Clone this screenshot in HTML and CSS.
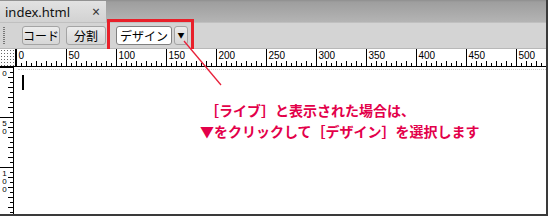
FILE: index.html
```html
<!DOCTYPE html>
<html lang="ja">
<head>
<meta charset="utf-8">
<link rel="stylesheet" href="styles.css">
</head>
<body>
<div class="frame">
  <div class="tabbar">
    <div class="tab"><span class="tab-name">index.html</span><span class="tab-close">×</span></div>
  </div>
  <div class="toolbar">
    <div class="grip"></div>
    <button class="btn b-code">コード</button>
    <button class="btn b-split">分割</button>
    <div class="group">
      <button class="btn active">デザイン</button>
      <button class="btn drop">▼</button>
    </div>
  </div>
  <div class="hruler-row">
    <div class="corner"></div>
    <svg class="hruler" width="531" height="18" id="hr"></svg>
  </div>
  <div class="main">
    <svg class="vruler" width="14" height="147" id="vr"></svg>
    <div class="canvas">
      <div class="dots"></div>
      <div class="caret"></div>
    </div>
  </div>
</div>
<svg class="leader" width="549" height="217"><line x1="184" y1="41" x2="221" y2="85" stroke="#e8203a" stroke-width="1.3"/></svg>
<div class="note">
  <p class="l1">［ライブ］と表示された場合は、</p>
  <p class="l2">▼をクリックして［デザイン］を選択します</p>
</div>
<script src="ruler.js"></script>
</body>
</html>
```
FILE: ruler.js
```js
(function(){
  var ns="http://www.w3.org/2000/svg";
  var hr=document.getElementById("hr");
  function el(p,n,a){var e=document.createElementNS(ns,n);for(var k in a)e.setAttribute(k,a[k]);p.appendChild(e);return e;}
  el(hr,"rect",{x:0,y:17,width:531,height:1,fill:"#000"});
  for(var k=0;k*5<531;k++){
    var x=k*5+0.5,h;
    if(k%10==0){h=18;}else if(k%2==0){h=6;}else{h=4;}
    el(hr,"line",{x1:x,y1:18-h,x2:x,y2:18,stroke:"#000","stroke-width":1});
    if(k%10==0){var t=el(hr,"text",{x:x+2,y:10,"font-size":"10","font-family":"Liberation Sans, Arial, sans-serif",fill:"#000"});t.textContent=String(k*5);}
  }
  var vr=document.getElementById("vr");
  el(vr,"rect",{x:13,y:0,width:1,height:147,fill:"#000"});
  for(var j=0;j*5<147;j++){
    var y=j*5+0.5,w;
    if(j%10==0){w=14;}else if(j%2==0){w=6;}else{w=4;}
    el(vr,"line",{x1:14-w,y1:y,x2:14,y2:y,stroke:"#000","stroke-width":1});
    if(j%10==0){
      var tt=el(vr,"text",{"class":"vlabel",x:4.5,y:y+1.5});
      tt.textContent=String(j*5);
    }
  }
})();
```
FILE: styles.css
```css
html,body{margin:0;padding:0;}
body{width:549px;height:217px;background:#fff;position:relative;overflow:hidden;font-family:"Noto Sans","Noto Sans CJK JP",sans-serif;}
.frame{width:546px;height:214px;border-right:2px solid #3a3a3a;border-bottom:2px solid #3a3a3a;background:#fff;display:flex;flex-direction:column;}
.tabbar{height:22px;background:linear-gradient(#8e8e8e 0,#9e9e9e 2px,#b4b4b4 100%);display:flex;align-items:flex-end;}
.tab{width:106px;height:21px;background:linear-gradient(#e2e2e2,#d2d2d2);display:flex;align-items:center;justify-content:space-between;padding:0 6px 0 5px;box-sizing:border-box;font-size:13px;color:#111;}
.tab-close{font-size:14px;color:#333;}
.toolbar{height:27px;background:#d4d4d4;border-top:1px solid #c0c0c0;border-bottom:1px solid #b8b8b8;box-sizing:border-box;display:flex;align-items:center;padding-left:3px;}
.grip{width:2px;height:18px;background:repeating-linear-gradient(#777 0 1px,transparent 1px 2px);margin-right:17px;}
.btn{height:19px;padding:0;border:1px solid #a4a4a4;border-radius:3px;background:linear-gradient(#ececec,#d6d6d6);font-family:"Noto Sans CJK JP",sans-serif;font-size:12px;line-height:17px;color:#000;display:flex;align-items:center;justify-content:center;box-sizing:border-box;}
.b-code{width:38px;}
.b-split{width:40px;margin-left:6px;}
.group{display:flex;align-items:center;gap:2px;margin-left:4px;outline:3px solid #e8202a;padding:3px 3px 3px 6px;height:27px;box-sizing:border-box;}
.btn.active{background:#fff;border-color:#808080;width:56px;}
.btn.drop{font-size:7px;width:14px;}
.hruler-row{height:18px;display:flex;background:#fff;}
.corner{width:16px;height:18px;box-sizing:border-box;border-bottom:1px solid #000;border-right:1px solid #000;background:radial-gradient(circle,#666 0.6px,transparent 0.8px) 0 0/3px 3px;}
.hruler{display:block;}
.main{flex:1;display:flex;}
.vruler{display:block;}
.vlabel{writing-mode:vertical-rl;text-orientation:upright;font-family:"Liberation Sans",Arial,sans-serif;font-size:8px;letter-spacing:-1px;fill:#000;}
.canvas{flex:1;position:relative;}
.dots{height:3px;margin-top:2px;border-top:1px dotted #ccc;margin-left:4px;}
.caret{position:absolute;left:8px;top:8px;width:2px;height:15px;background:#000;}
.leader{position:absolute;left:0;top:0;pointer-events:none;}
.note{position:absolute;left:200px;top:100px;color:#e3004a;font-family:"Noto Sans CJK JP",sans-serif;font-weight:bold;font-size:14px;line-height:20px;}
.note p{margin:0;}
.note .l1{padding-left:5px;margin-bottom:1px;}
```
